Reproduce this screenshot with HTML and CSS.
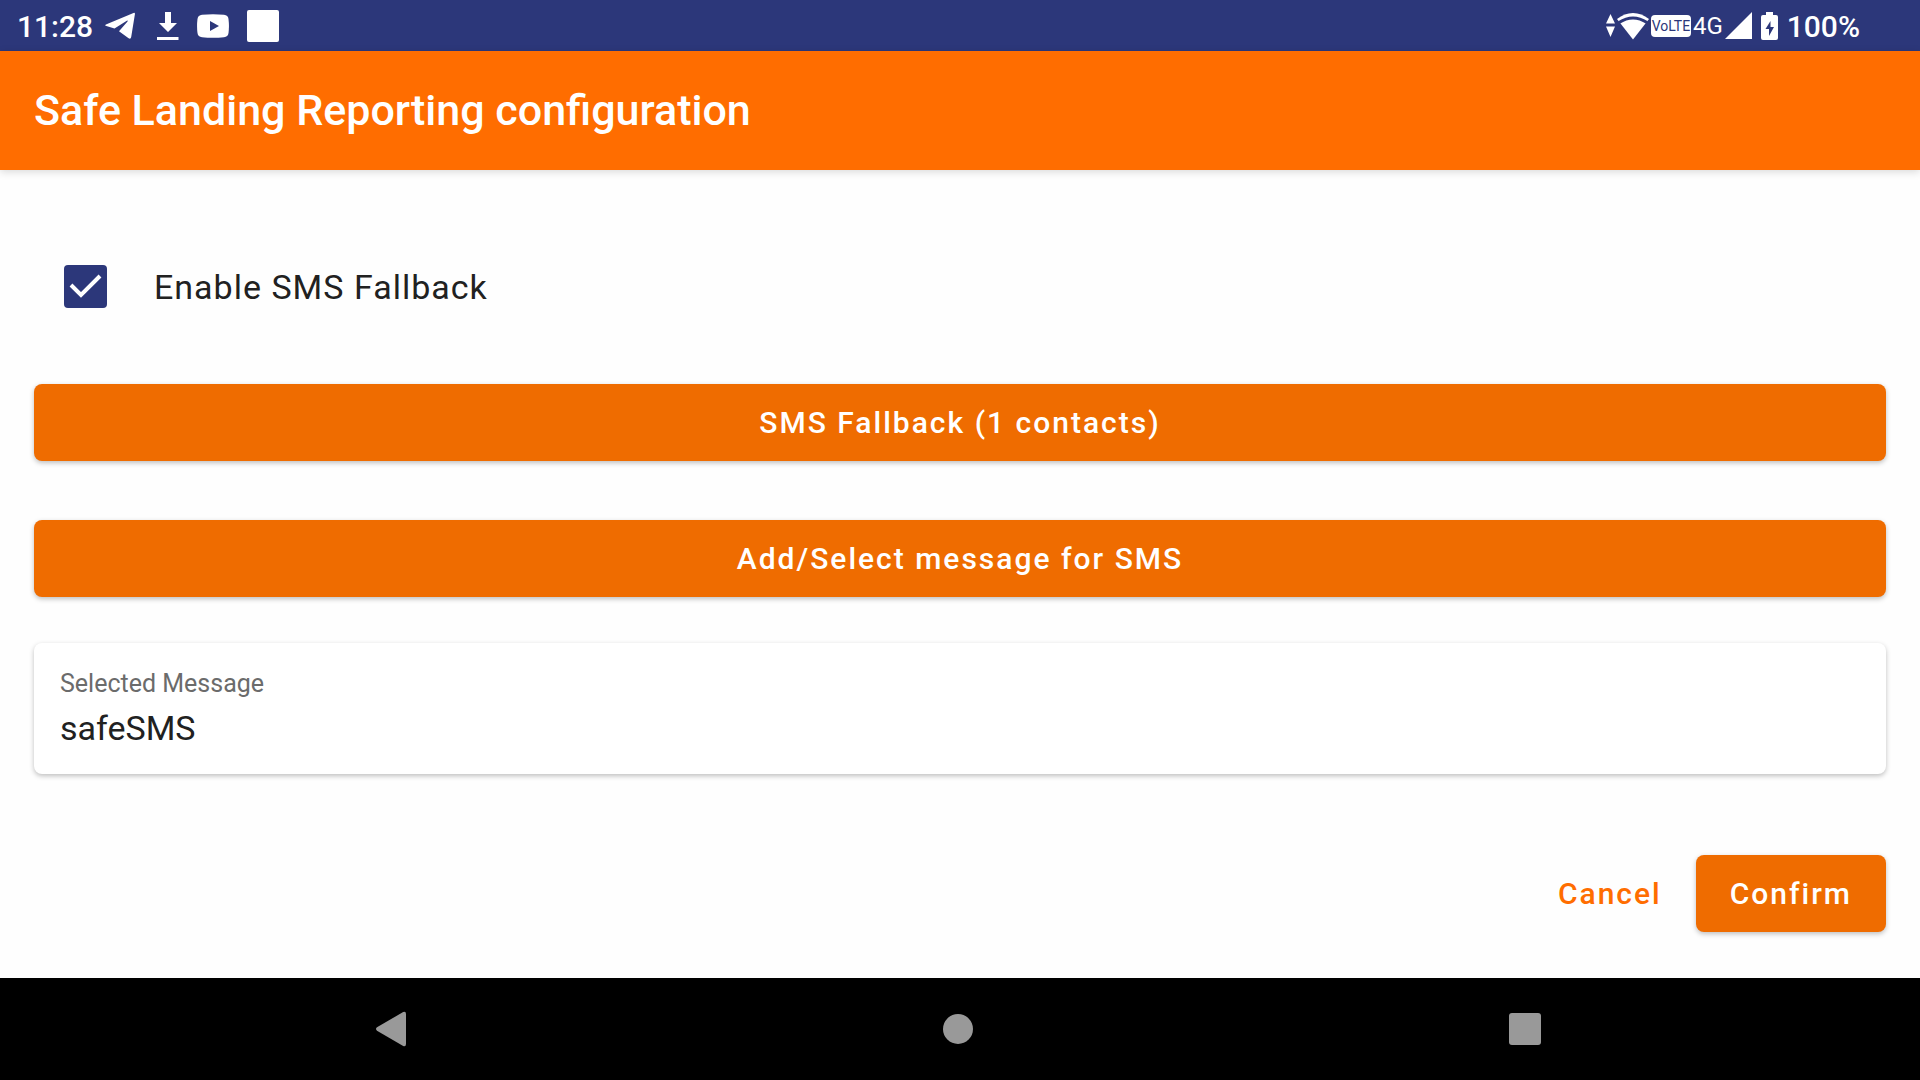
FILE: index.html
```
<!DOCTYPE html>
<html lang="en">

<head>
    <meta charset="UTF-8">
    <meta name="viewport" content="width=device-width, initial-scale=1.0">
    <title>Safe Landing Reporting configuration</title>
    <link rel="stylesheet" href="styles.css">
</head>

<body>
    <div class="status-bar">
        <div class="status-left">
            <span class="status-text">11:28</span>
            <svg width="30" height="28" viewBox="0 0 30 28" fill="#fff">
                <path d="M1.500 12.200 28.500 1q1.700-.6 1.400 1.300L26.200 25q-.5 2.500-2.600 1.200L14 19.300 22.500 9.500q.8-1.300-.7-.7L9.500 16.600 1.300 14q-2.200-.8.200-1.800z"/>
            </svg>
            <svg width="26" height="30" viewBox="-4 0 26 30" fill="#fff">
                <path d="M8 1h6v11h6l-9 9-9-9h6zM0 26h21.500v3H0z"/>
            </svg>
            <svg width="32" height="24" viewBox="0 0 32 24">
                <path fill="#fff" d="M5 .8Q16-.2 27 .8q4 .4 4.500 4.200.9 7 0 14-.5 3.800-4.500 4.200-11 1-22 0Q1 22.800.5 19q-.9-7 0-14Q1 1.200 5 .8z"/>
                <path fill="#2c377a" d="M13 7l9 5-9 5z"/>
            </svg>
            <svg width="32" height="32" viewBox="0 0 32 32" fill="#fff">
                <rect width="32" height="32" rx="2"/>
            </svg>
        </div>
        <div class="status-right">
            <svg width="9" height="24" viewBox="0 0 9 24" fill="#fff">
                <path d="M4.500 0 9 9.500H0zM0 12.500h9L4.500 23z"/>
            </svg>
            <svg width="32" height="28" viewBox="0 0 32 28">
                <path fill="#fff" d="M16 1q8.500 0 16 6L16 27.500 0 7q7.500-6 16-6z"/>
                <path fill="none" stroke="#2c377a" stroke-width="3" d="M2 10.500Q16 1.500 30 10.500"/>
            </svg>
            <span class="volte">VoLTE</span>
            <span class="network">4G</span>
            <svg width="27" height="27" viewBox="0 0 27 27" fill="#fff">
                <path d="M27 0v27H0z"/>
            </svg>
            <svg class="battery" width="17" height="28" viewBox="0 0 17 28">
                <path fill="#fff" d="M5 0h7v3h3q2 0 2 2v21q0 2-2 2H2q-2 0-2-2V5q0-2 2-2h3z"/>
                <path fill="#2c377a" d="M9.500 9 4.500 17H8v7l5-9H9.500z"/>
            </svg>
            <span class="status-text">100%</span>
        </div>
    </div>

    <header class="app-bar">
        <h1>Safe Landing Reporting configuration</h1>
    </header>

    <main class="content">
        <div class="check-row">
            <input type="checkbox" id="smsFallback" name="smsFallback" checked>
            <label for="smsFallback">Enable SMS Fallback</label>
        </div>

        <button type="button" class="btn contacts-btn">SMS Fallback (1 contacts)</button>
        <button type="button" class="btn message-btn">Add/Select message for SMS</button>

        <div class="card">
            <p class="card-label">Selected Message</p>
            <p class="card-value">safeSMS</p>
        </div>

        <div class="actions">
            <button type="button" class="btn btn-text">Cancel</button>
            <button type="button" class="btn">Confirm</button>
        </div>
    </main>

    <nav class="nav-bar">
        <button type="button" aria-label="Back">
            <svg width="30" height="36" viewBox="0 0 30 36" fill="#999">
                <path d="M1 16.300 27.200 1Q30 0 30 3v30q0 3-2.800 2L1 19.700Q-1 18 1 16.300z"/>
            </svg>
        </button>
        <button type="button" aria-label="Home">
            <svg width="30" height="30" viewBox="0 0 30 30" fill="#999">
                <circle cx="15" cy="15" r="15"/>
            </svg>
        </button>
        <button type="button" aria-label="Recent apps">
            <svg width="32" height="32" viewBox="0 0 32 32" fill="#999">
                <rect width="32" height="32" rx="3"/>
            </svg>
        </button>
    </nav>
</body>

</html>
```

FILE: styles.css
```
* {
    box-sizing: border-box;
}

body {
    font-family: Roboto, "Liberation Sans", sans-serif;
    background-color: #fefefe;
    color: #212121;
    margin: 0;
    min-height: 100vh;
    display: flex;
    flex-direction: column;
}

h1, p {
    margin: 0;
}

svg {
    display: block;
    flex-shrink: 0;
}

/* Status bar */
.status-bar {
    background-color: #2c377a;
    color: #fff;
    height: 51px;
    padding: 0 60px 0 17px;
    display: flex;
    justify-content: space-between;
    align-items: center;
}

.status-left, .status-right {
    display: flex;
    align-items: center;
}

.status-left {
    gap: 18px;
}

.status-left .status-text {
    margin-right: -6px;
}

.status-right {
    gap: 2px;
}

.status-text {
    font-size: 30px;
    font-weight: 500;
    line-height: 51px;
    padding-top: 2px;
}

.volte {
    background-color: #fff;
    color: #2c377a;
    border-radius: 4px;
    width: 40px;
    font-size: 14px;
    line-height: 22px;
    text-align: center;
}

.network {
    font-size: 24px;
}

.battery {
    margin: 0 7px;
}

/* App bar */
.app-bar {
    background-color: #ff6d00;
    color: #fff;
    padding: 34px;
    box-shadow: 0 2px 8px rgba(0, 0, 0, 0.15);
}

.app-bar h1 {
    font-size: 43px;
    font-weight: 500;
    line-height: 51px;
}

/* Content */
.content {
    flex: 1;
    padding: 95px 34px 46px;
    display: flex;
    flex-direction: column;
}

.check-row {
    display: flex;
    align-items: center;
    gap: 47px;
    padding-left: 30px;
    margin-bottom: 76px;
}

.check-row label {
    font-size: 34px;
    line-height: 40px;
    letter-spacing: 1px;
}

.check-row input {
    appearance: none;
    width: 43px;
    height: 43px;
    margin: 0;
    border-radius: 4px;
    border: 4px solid #666;
    cursor: pointer;
}

.check-row input:checked {
    border: none;
    background: #2c377a url("data:image/svg+xml,%3Csvg xmlns='http://www.w3.org/2000/svg' viewBox='0 0 43 43'%3E%3Cpath d='M7 20l10 10 19-19' fill='none' stroke='%23fff' stroke-width='4'/%3E%3C/svg%3E");
}

.btn {
    background-color: #ef6c00;
    color: #fff;
    font-family: inherit;
    font-size: 30px;
    font-weight: 500;
    letter-spacing: 2px;
    line-height: 35px;
    padding: 21px 34px;
    border: none;
    border-radius: 8px;
    box-shadow: 0 2px 5px rgba(0, 0, 0, 0.25);
    cursor: pointer;
}

.contacts-btn {
    margin-bottom: 59px;
}

.message-btn {
    margin-bottom: 46px;
}

.card {
    background-color: #fff;
    border-radius: 8px;
    box-shadow: 0 2px 5px rgba(0, 0, 0, 0.25);
    padding: 26px;
    margin-bottom: 81px;
}

.card-label {
    color: #6b6b6b;
    font-size: 25px;
    line-height: 30px;
    margin-bottom: 9px;
}

.card-value {
    font-size: 34px;
    line-height: 40px;
}

.actions {
    display: flex;
    justify-content: flex-end;
}

.btn-text {
    background: none;
    color: #ff6d00;
    box-shadow: none;
}

/* Navigation bar */
.nav-bar {
    background-color: #000;
    height: 102px;
    padding: 0 112px 0 108px;
    display: flex;
}

.nav-bar button {
    flex: 1;
    display: flex;
    justify-content: center;
    align-items: center;
    background: none;
    border: none;
    padding: 0;
    cursor: pointer;
}
```
